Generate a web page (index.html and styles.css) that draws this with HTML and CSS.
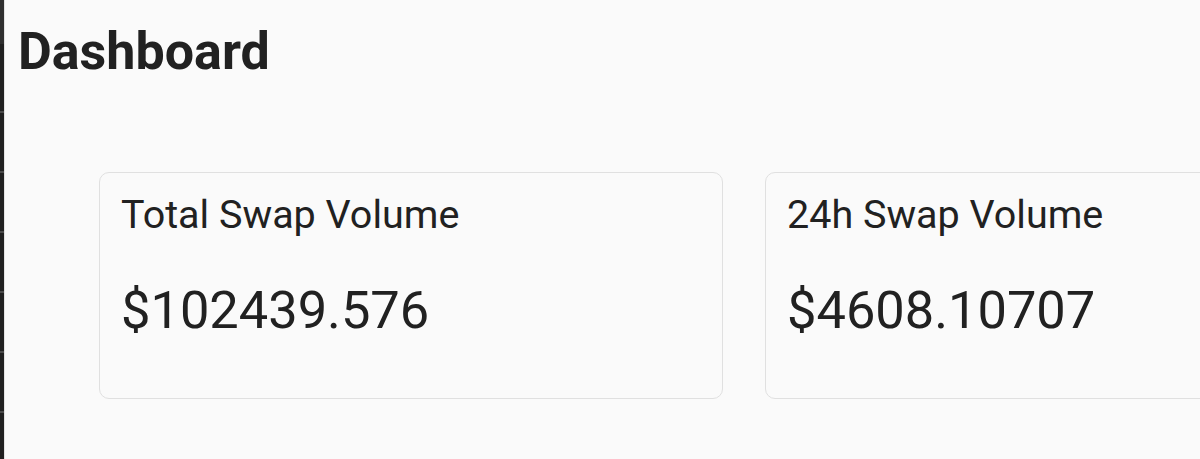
FILE: index.html
```html
<!DOCTYPE html>
<html lang="en">
<head>
<meta charset="utf-8">
<title>Dashboard</title>
<link rel="stylesheet" href="styles.css">
</head>
<body>
<div class="app">
  <aside class="rail">
    <div class="rail-top"></div>
    <div class="rail-ticks"></div>
  </aside>
  <main class="main">
    <h1 class="title">Dashboard</h1>
    <section class="cards">
      <div class="card">
        <div class="card-label">Total Swap Volume</div>
        <div class="card-value">$102439.576</div>
      </div>
      <div class="card">
        <div class="card-label">24h Swap Volume</div>
        <div class="card-value">$4608.10707</div>
      </div>
    </section>
  </main>
</div>
</body>
</html>
```

FILE: styles.css
```css
html, body {
  margin: 0;
  padding: 0;
  height: 100%;
  background: #fafafa;
  overflow: hidden;
}
body {
  font-family: Roboto, "Liberation Sans", Arial, sans-serif;
  color: #212121;
}
.app {
  display: flex;
  height: 459px;
  width: 1200px;
}
.rail {
  flex: 0 0 4px;
  display: flex;
  flex-direction: column;
  background-color: #202020;
  border-right: 1px solid #e3e3e3;
}
.rail-top {
  height: 44px;
  background: #2f2f2f;
}
.rail-ticks {
  flex: 1;
  margin-top: 67px;
  background-image: repeating-linear-gradient(to bottom, #4a4a4a 0, #4a4a4a 2px, transparent 2px, transparent 60px);
}
.main {
  flex: 1;
  min-width: 0;
  padding-left: 13px;
  overflow: hidden;
}
.title {
  margin: 21px 0 0;
  font-size: 52px;
  line-height: 1.2;
  font-weight: 700;
  letter-spacing: 0;
}
.cards {
  display: flex;
  gap: 42px;
  margin-top: 89px;
  margin-left: 81px;
}
.card {
  flex: 0 0 624px;
  height: 227px;
  box-sizing: border-box;
  border: 1px solid #e0e0e0;
  border-radius: 10px;
  background: #fafafa;
  padding: 18px 21px 0;
}
.card-label {
  font-size: 39.5px;
  line-height: 1.2;
  font-weight: 400;
}
.card-value {
  margin-top: 40px;
  font-size: 52.4px;
  line-height: 1.2;
  font-weight: 400;
}
```
